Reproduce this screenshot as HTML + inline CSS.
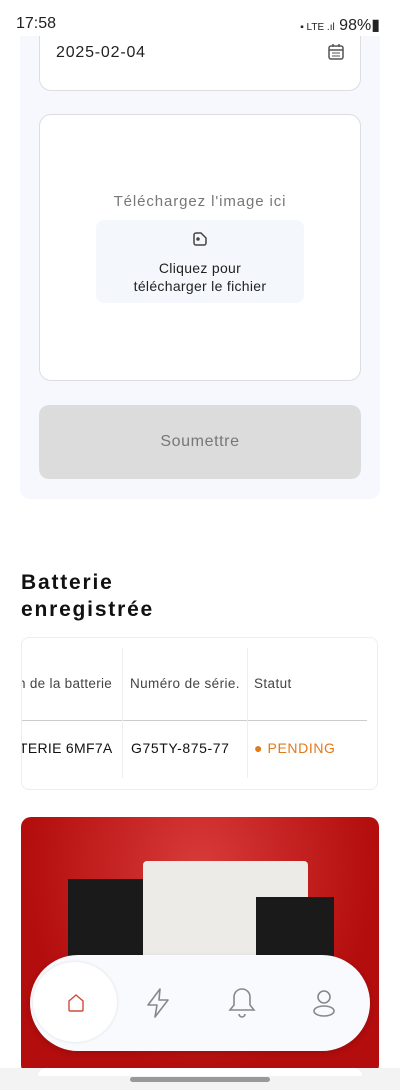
<!DOCTYPE html>
<html><head><meta charset="utf-8"><style>
*{box-sizing:border-box;margin:0;padding:0}
body{width:400px;height:1090px;overflow:hidden;background:#fff;font-family:"Liberation Sans",sans-serif;position:relative}
.abs{position:absolute}
</style></head><body>

<div class="abs" style="left:20px;top:36px;width:360px;height:463px;background:#f6f8fd;border-radius:0 0 10px 10px"></div>
<div class="abs" style="left:39px;top:20px;width:322px;height:71px;background:#fff;border:1.5px solid #ddd;border-radius:12px"></div>
<div class="abs" style="left:56px;top:44px;font-size:16px;color:#222;letter-spacing:0.8px">2025-02-04</div>
<svg class="abs" style="left:327px;top:43px" width="18" height="18" viewBox="0 0 18 18" fill="none" stroke="#555" stroke-width="1.5"><rect x="2" y="3" width="14" height="13" rx="2"/><line x1="2" y1="7" x2="16" y2="7"/><line x1="6" y1="1" x2="6" y2="4"/><line x1="12" y1="1" x2="12" y2="4"/><path d="M5 10h8M5 13h8" stroke-width="1"/></svg>

<div class="abs" style="left:0;top:0;width:400px;height:36px;background:#fff"></div>
<div class="abs" style="left:16px;top:15px;font-size:16px;color:#222">17:58</div>
<div class="abs" style="right:20px;top:15px;font-size:16px;color:#222;white-space:nowrap"><span style="font-size:10px">▪ LTE .ıl</span> 98%▮</div>

<div class="abs" style="left:39px;top:114px;width:322px;height:267px;background:#fff;border:1.5px solid #ddd;border-radius:12px"></div>
<div class="abs" style="left:0;width:400px;top:193px;text-align:center;font-size:15px;color:#777;letter-spacing:0.9px">Téléchargez l'image ici</div>
<div class="abs" style="left:96px;top:220px;width:208px;height:83px;background:#f4f7fc;border-radius:8px"></div>
<svg class="abs" style="left:191px;top:230px" width="18" height="18" viewBox="0 0 18 18" fill="none" stroke="#444" stroke-width="1.5"><path d="M3 5a2 2 0 0 1 2-2h5l5 5v5a2 2 0 0 1-2 2H5a2 2 0 0 1-2-2z"/><circle cx="7" cy="9" r="1" fill="#444"/></svg>
<div class="abs" style="left:0;width:400px;top:259px;text-align:center;font-size:14px;line-height:18px;color:#222;letter-spacing:0.3px">Cliquez pour<br>télécharger le fichier</div>

<div class="abs" style="left:39px;top:405px;width:322px;height:74px;background:#dcdcdc;border-radius:10px;text-align:center;line-height:74px;font-size:16px;color:#777;letter-spacing:0.6px">Soumettre</div>

<div class="abs" style="left:21px;top:569px;font-size:21px;font-weight:bold;line-height:27px;color:#111;letter-spacing:1.8px">Batterie<br>enregistrée</div>

<div class="abs" style="left:21px;top:637px;width:357px;height:153px;border:1px solid #eee;border-radius:8px;overflow:hidden">
 <div class="abs" style="left:0;top:82px;width:345px;height:1px;background:#ccc"></div>
 <div class="abs" style="left:100px;top:10px;width:1px;height:130px;background:#eee"></div>
 <div class="abs" style="left:225px;top:10px;width:1px;height:130px;background:#eee"></div>
 <div class="abs" style="left:-4px;top:38px;font-size:13.5px;color:#444;white-space:nowrap;letter-spacing:0.3px">n de la batterie</div>
 <div class="abs" style="left:108px;top:38px;font-size:13.5px;color:#444;letter-spacing:0.4px">Numéro de série.</div>
 <div class="abs" style="left:232px;top:38px;font-size:13.5px;color:#444;letter-spacing:0.4px">Statut</div>
 <div class="abs" style="left:-3px;top:102px;font-size:14px;color:#111;white-space:nowrap;letter-spacing:0.3px">TERIE 6MF7A</div>
 <div class="abs" style="left:109px;top:102px;font-size:14px;color:#111;letter-spacing:0.6px">G75TY-875-77</div>
 <div class="abs" style="left:232px;top:102px;font-size:14px;color:#e07a1a;letter-spacing:0.6px">● PENDING</div>
</div>

<div class="abs" style="left:21px;top:817px;width:358px;height:258px;border-radius:10px;background:radial-gradient(ellipse at 50% 20%,#d83a3a,#b30d0d 70%);overflow:hidden">
 <div class="abs" style="left:47px;top:62px;width:80px;height:90px;background:#1a1a1a"></div>
 <div class="abs" style="left:122px;top:44px;width:165px;height:110px;background:#ecebe8;border-radius:4px"></div>
 <div class="abs" style="left:235px;top:80px;width:78px;height:70px;background:#1a1a1a"></div>
</div>

<div class="abs" style="left:30px;top:955px;width:340px;height:96px;background:#f8fafe;border-radius:48px;box-shadow:0 2px 6px rgba(0,0,0,.15)"></div>
<div class="abs" style="left:33px;top:962px;width:84px;height:80px;background:#fff;border-radius:50%;box-shadow:0 0 3px rgba(0,0,0,.12)"></div>
<svg class="abs" style="left:66px;top:992px" width="20" height="22" viewBox="0 0 20 22" fill="none" stroke="#d04a3a" stroke-width="1.4"><path d="M3 9l7-6 7 6v9a1 1 0 0 1-1 1H4a1 1 0 0 1-1-1z"/></svg>
<svg class="abs" style="left:145px;top:987px" width="26" height="32" viewBox="0 0 26 32" fill="none" stroke="#888" stroke-width="1.6" stroke-linejoin="round"><path d="M15 2L3 18h9l-2 12 13-17h-9z"/></svg>
<svg class="abs" style="left:227px;top:986px" width="30" height="34" viewBox="0 0 30 34" fill="none" stroke="#888" stroke-width="1.6"><path d="M15 3a8 8 0 0 0-8 8v8l-4 5h24l-4-5v-8a8 8 0 0 0-8-8z"/><path d="M12 28a3 3 0 0 0 6 0"/></svg>
<svg class="abs" style="left:311px;top:988px" width="26" height="30" viewBox="0 0 26 30" fill="none" stroke="#888" stroke-width="1.6"><circle cx="13" cy="9" r="6"/><ellipse cx="13" cy="23" rx="10" ry="5"/></svg>

<div class="abs" style="left:0;top:1068px;width:400px;height:22px;background:#f3f3f3"></div>
<div class="abs" style="left:38px;top:1068px;width:324px;height:8px;background:#fff;border-radius:8px 8px 0 0"></div>
<div class="abs" style="left:130px;top:1077px;width:140px;height:5px;background:#999;border-radius:3px"></div>
</body></html>
